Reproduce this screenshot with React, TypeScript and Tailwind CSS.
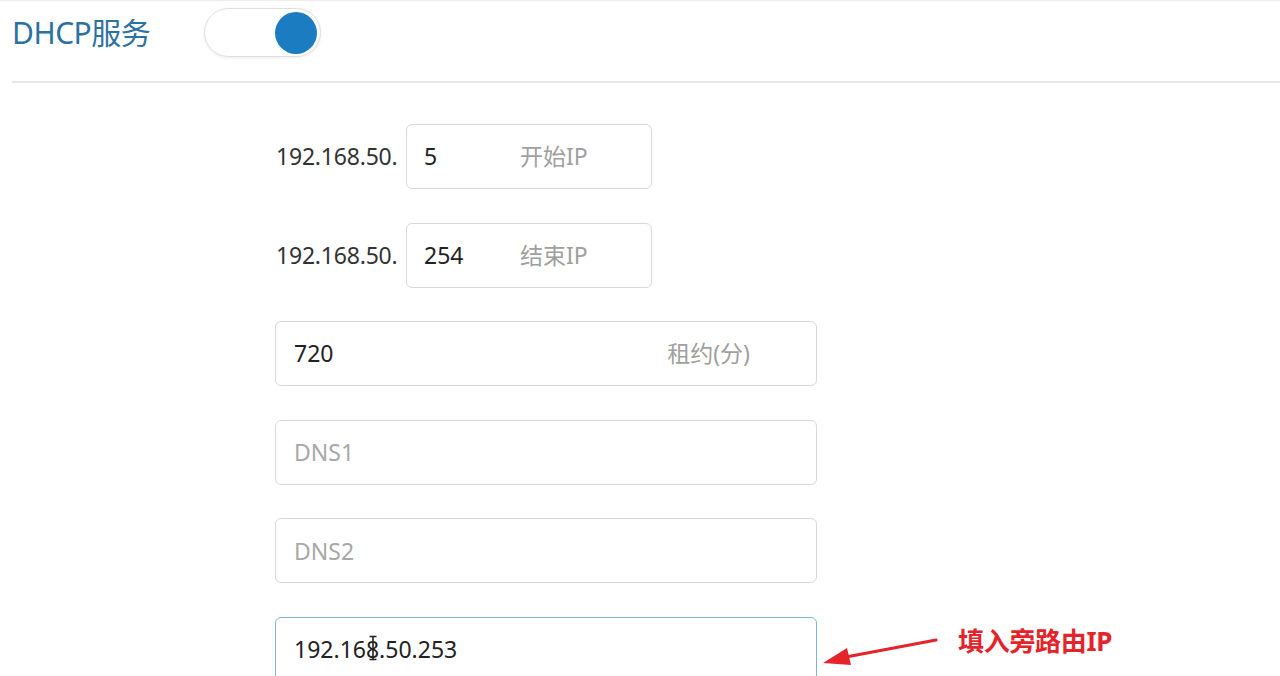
const font = "font-['Noto_Sans','Noto_Sans_CJK_SC',sans-serif]";

function PrefixRow({ value, label }: { value: string; label: string }) {
  return (
    <div className="flex items-center">
      <span className="w-[131px] pl-px text-[23px] tracking-[-0.2px] text-[#333]">192.168.50.</span>
      <div className="flex h-[65px] w-[246px] items-center rounded-md border border-[#d8d8d8] pl-[17px] text-[23px]">
        <span className="w-[96px] text-[#222]">{value}</span>
        <span className="text-[#a0a0a0]">{label}</span>
      </div>
    </div>
  );
}

function Field({ value, placeholder, right, focused }: { value?: string; placeholder?: string; right?: string; focused?: boolean }) {
  return (
    <div
      className={`relative flex h-[65px] w-[542px] shrink-0 items-center justify-between rounded-md border pl-[18px] pr-[66px] text-[23px] ${
        focused ? "border-[#7fb6d2]" : "border-[#d8d8d8]"
      }`}
    >
      {value ? <span className="text-[#222]">{value}</span> : <span className="text-[#a8a8a8]">{placeholder}</span>}
      {right && <span className="text-[#a0a0a0]">{right}</span>}
      {focused && (
        <svg className="absolute left-[92px] top-[17px]" width="10" height="26" viewBox="0 0 10 26">
          <path d="M1.5 1.5h7M5 1.5v23M1.5 24.5h7" stroke="#222" strokeWidth="1.6" fill="none" />
        </svg>
      )}
    </div>
  );
}

export default function App() {
  return (
    <div className={`relative h-[676px] w-[1280px] overflow-hidden border-t border-[#eeeeee] bg-white ${font}`}>
      {/* Header */}
      <div className="flex h-[63px] items-center pl-3">
        <span className="w-[192px] text-[30px] tracking-[-0.5px] text-[#2c72a0]">DHCP服务</span>
        <div className="flex h-[49px] w-[117px] items-center justify-end rounded-full border border-[#dedede] pr-[3px] shadow-[0_1px_3px_rgba(0,0,0,0.08)]">
          <div className="h-[42px] w-[42px] rounded-full bg-[#1b7cc2]" />
        </div>
      </div>
      <div className="ml-3 mt-[17px] border-b-2 border-[#e6e6e6]" />

      {/* Form */}
      <div className="flex flex-col gap-[33.6px] pl-[275px] pt-[41px]">
        <PrefixRow value="5" label="开始IP" />
        <PrefixRow value="254" label="结束IP" />
        <Field value="720" right="租约(分)" />
        <Field placeholder="DNS1" />
        <Field placeholder="DNS2" />
        <Field value="192.168.50.253" focused />
      </div>

      {/* Annotation */}
      <svg className="absolute left-[818px] top-[628px]" width="124" height="44" viewBox="0 0 124 44">
        <path d="M118 11 L28 28" stroke="#e3242b" strokeWidth="3.2" strokeLinecap="round" />
        <path d="M5 34 L29 19 L33 36 Z" fill="#e3242b" />
      </svg>
      <span className="absolute left-[958px] top-[621px] text-[26px] font-bold tracking-[-0.3px] text-[#e3242b]">填入旁路由IP</span>
    </div>
  );
}
